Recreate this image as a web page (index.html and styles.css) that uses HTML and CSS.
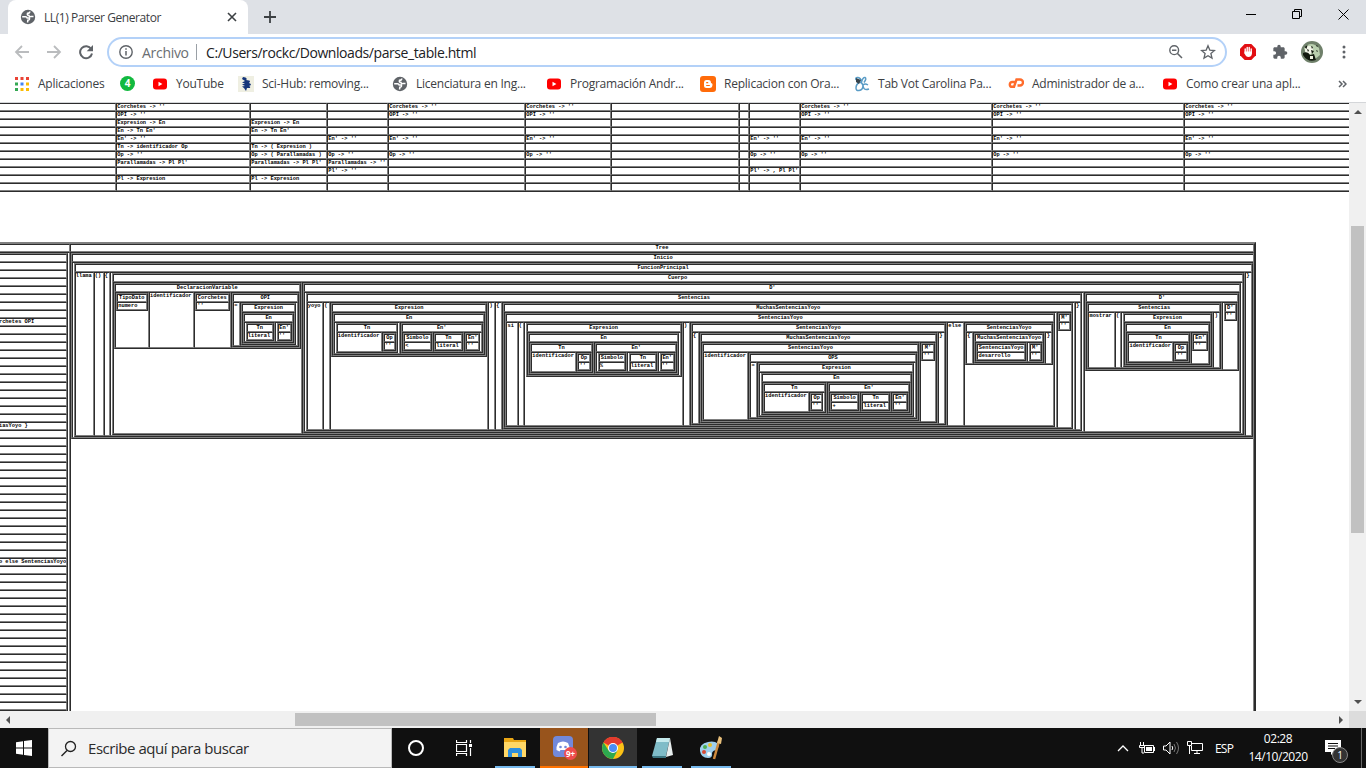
FILE: index.html
```html
<!DOCTYPE html>
<html lang="es">
<head>
<meta charset="utf-8">
<title>LL(1) Parser Generator</title>
<link rel="stylesheet" href="styles.css">
</head>
<body>
<svg width="0" height="0" class="defs">
  <symbol id="globe" viewBox="0 0 16 16"><circle cx="8" cy="8" r="7.2" fill="#5f6368"/><path d="M2.200 7.800h3.300q1.500 0 1.700 1.300h2.300q.3 2-1.700 2.200l-.2 2.200M9.800 2.400q0 1.800-2.300 1.800-.8 2 1.500 2.200 0 1.400 1.800 1.200h2.700" fill="none" stroke="#fff" stroke-width="1.500"/></symbol>
  <symbol id="yt" viewBox="0 0 16 16"><rect x="1" y="2.5" width="14" height="11" rx="3" fill="#f00"/><path d="M6.500 5.800v4.400L10.400 8z" fill="#fff"/></symbol>
</svg>
<header class="tabs">
  <div class="tab">
    <svg class="i16" viewBox="0 0 16 16"><use href="#globe"/></svg>
    <span class="tab-title">LL(1) Parser Generator</span>
    <svg class="close" viewBox="0 0 10 10"><path d="M1 1l8 8M9 1L1 9" stroke="#3c4043" stroke-width="1.6"/></svg>
  </div>
  <svg class="plus" viewBox="0 0 12 12"><path d="M6 0v12M0 6h12" stroke="#3c4043" stroke-width="1.8"/></svg>
  <div class="winctl">
    <svg width="11" height="11"><path d="M0 5.500h10" stroke="#000"/></svg>
    <svg width="11" height="11"><path d="M.5 2.500h7v7h-7zM2.500 2.500v-2h7v7h-2" fill="none" stroke="#000"/></svg>
    <svg width="11" height="11"><path d="M.5.5l10 10M10.500.5l-10 10" stroke="#000"/></svg>
  </div>
</header>
<nav class="toolbar">
  <svg class="nav" viewBox="0 0 16 16"><path d="M15 8H2M8 2L2 8l6 6" stroke="#babcbe" stroke-width="1.8" fill="none"/></svg>
  <svg class="nav" viewBox="0 0 16 16"><path d="M1 8h13M8 2l6 6-6 6" stroke="#babcbe" stroke-width="1.8" fill="none"/></svg>
  <svg class="nav" viewBox="0 0 16 16"><path d="M13.200 5A6 6 0 1 0 14 9.500" stroke="#5f6368" stroke-width="2" fill="none"/><path d="M15 1v6.300H8.700z" fill="#5f6368"/></svg>
  <div class="omnibox">
    <svg class="info" viewBox="0 0 14 14"><circle cx="7" cy="7" r="6.200" fill="none" stroke="#5f6368" stroke-width="1.400"/><path d="M7 6v4.500M7 3.300v1.500" stroke="#5f6368" stroke-width="1.500"/></svg>
    <span class="scheme">Archivo</span><i class="sep"></i><span class="url">C:/Users/rockc/Downloads/parse_table.html</span>
    <svg class="mag" viewBox="0 0 14 14"><circle cx="5.200" cy="5.200" r="4.400" fill="none" stroke="#5f6368" stroke-width="1.400"/><path d="M8.500 8.500L13 13M3 5.200h4.400" stroke="#5f6368" stroke-width="1.500"/></svg>
    <svg class="star" viewBox="0 0 16 16"><path d="M8 1.800l1.800 4.300 4.700.4-3.600 3 1.100 4.600L8 11.700l-4 2.400 1.100-4.600-3.600-3 4.700-.4z" fill="none" stroke="#5f6368" stroke-width="1.300"/></svg>
  </div>
  <svg class="abp" viewBox="0 0 16 16"><path d="M4.700 0h6.600L16 4.700v6.600L11.300 16H4.700L0 11.300V4.700z" fill="#e20e12"/><path d="M5.200 9V5m2 3V3.500M9.200 8V3.500M11.200 9V5" stroke="#fff" stroke-width="1.400" stroke-linecap="round"/><path d="M4.500 7.500h7.400V10q-.5 3-3.500 3Q6 13 4.500 9.500z" fill="#fff"/></svg>
  <svg class="ext" viewBox="0 0 24 24"><path fill="#5f6368" d="M20.500 11H19V7c0-1.100-.9-2-2-2h-4V3.500a2.500 2.500 0 0 0-5 0V5H4c-1.100 0-2 .9-2 2v3.800h1.500a2.700 2.700 0 0 1 0 5.400H2V20c0 1.100.9 2 2 2h3.800v-1.500a2.700 2.700 0 0 1 5.400 0V22H17c1.100 0 2-.9 2-2v-4h1.500a2.500 2.500 0 0 0 0-5z"/></svg>
  <svg class="avatar" viewBox="0 0 22 22"><circle cx="11" cy="11" r="11" fill="#6f806a"/><path d="M3 7q7-8 15 0l1 7-6 5-7-4z" fill="#b9cfae"/><circle cx="8" cy="9" r="4" fill="#f2f5e8"/><path d="M2 12q5-2 7 2l4-1 2 6q-8 3-13-5zM3.500 6l3-2-1 4zM10 5l2 1-1 2zM6 8l2 1-1 2zM10 9l3 1-2 3zM15 4l2 1-1 1zM15 9l2 1-1 1z" fill="#12190f"/><path d="M9 15l3 0v3H9z" fill="#eef2e0"/></svg>
  <svg class="dots" viewBox="0 0 4 16"><circle cx="2" cy="3" r="1.500"/><circle cx="2" cy="8" r="1.500"/><circle cx="2" cy="13" r="1.500"/></svg>
</nav>
<nav class="bookmarks">
  <a class="b1"><svg class="i16" viewBox="0 0 16 16"><path d="M1 1h3v3H1zM6.500 1h3v3h-3zM12 1h3v3h-3z" fill="#ea4335"/><path d="M1 6.500h3v3H1zM1 12h3v3H1z" fill="#34a853"/><path d="M6.500 6.500h3v3h-3z" fill="#4285f4"/><path d="M12 6.500h3v3h-3zM12 12h3v3h-3zM6.500 12h3v3h-3z" fill="#fbbc04"/></svg>Aplicaciones</a>
  <a class="b2"><span class="wa">4</span></a>
  <a class="b3"><svg class="i16" viewBox="0 0 16 16"><use href="#yt"/></svg>YouTube</a>
  <a class="b4"><svg class="i16" viewBox="0 0 16 16"><path d="M0 0h16v16H0z" fill="#efefe2"/><path d="M5 1q3 0 4 2l-1 1q4 0 4 1.500L11 7q2 .5 2 2l-2 1q2 .5 1 2H9l-1 3-2-3-2-1.500 3-.5-3-1.500 3-1L4 6.500 7 5 4 3z" fill="#15357a"/></svg>Sci-Hub: removing...</a>
  <a class="b5"><svg class="i16" viewBox="0 0 16 16"><use href="#globe"/></svg>Licenciatura en Ing...</a>
  <a class="b6"><svg class="i16" viewBox="0 0 16 16"><use href="#yt"/></svg>Programación Andr...</a>
  <a class="b7"><svg class="i16" viewBox="0 0 16 16"><rect width="16" height="16" rx="3" fill="#ff6b0a"/><path d="M6 4h2.500Q11 4 11 7q1.500 0 1.500 1.500Q12.500 12 9.500 12H6.500Q4 12 4 9.500v-3Q4 4 6 4z" fill="#fff"/><path d="M6.200 6.600h2M6.200 9.500h3.600" stroke="#ff6b0a" stroke-width="1.200"/></svg>Replicacion con Ora...</a>
  <a class="b8"><svg class="i16" viewBox="0 0 16 16"><path d="M2 4q-1-3 2-2.500Q7 2 7.500 6 9 1 11 1.500q2 1-1 5M6 6q-4 2-4 6 0 3 3 2.500Q9 14 9 9.500 8.500 7 6 6M9 9q0 6 6 4M14 9q-3-2-5 0" fill="none" stroke="#5a9cc6" stroke-width="1.500"/><path d="M2 2l5 2-2 4-3-2z" fill="#38444c"/></svg>Tab Vot Carolina Pa...</a>
  <a class="b9"><svg class="i16" viewBox="0 0 16 16"><path d="M7 6H4.200a2.300 2.300 0 0 0 0 4.800H6L8.500 3.500H12a3 3 0 0 1 0 6h-2.500" fill="none" stroke="#ff6c2c" stroke-width="2.400"/></svg>Administrador de a...</a>
  <a class="b10"><svg class="i16" viewBox="0 0 16 16"><use href="#yt"/></svg>Como crear una apl...</a>
  <svg class="more" viewBox="0 0 9 8"><path d="M1 1l3 3-3 3M5 1l3 3-3 3" fill="none" stroke="#5f6368" stroke-width="1.500"/></svg>
</nav>
<main class="view">
  <div class="page">
    <table class="parse" id="parse"></table>
    <table class="trace">
      <tr><th class="stack-col"></th><th class="tree-col">Tree</th></tr>
      <tr><td class="tall"><table class="stack" id="stack"></table></td><td id="tree"></td></tr>
    </table>
  </div>
  <div class="vbar"><i class="up"></i><i class="vthumb"></i><i class="down"></i></div>
  <div class="hbar"><i class="left"></i><i class="hthumb"></i><i class="right"></i></div>
  <div class="corner"></div>
</main>
<footer class="taskbar">
  <div class="start"><svg width="16" height="16" viewBox="0 0 16 16"><path d="M0 2.300L7 1.200v6.300H0zM8 1.100L16 0v7.500H8zM0 8.500h7v6.300L0 13.700zM8 8.500h8V16l-8-1.100z" fill="#fff"/></svg></div>
  <div class="search"><svg width="17" height="17" viewBox="0 0 17 17"><circle cx="10.500" cy="6.500" r="5" fill="none" stroke="#222" stroke-width="1.300"/><path d="M7 10.500L1.500 16" stroke="#222" stroke-width="1.400"/></svg><span>Escribe aquí para buscar</span></div>
  <div class="app first"><svg width="18" height="18"><circle cx="9" cy="9" r="7" fill="none" stroke="#fff" stroke-width="2"/></svg></div>
  <div class="app first"><svg width="17" height="16"><path d="M.5 0v2.500h10V0M.5 16v-2.500h10V16M.5 4.500h10v7H.5zM14.500 0v3M14.500 8v8" fill="none" stroke="#fff" stroke-width="1.200"/><path d="M13 4h3v3h-3z" fill="#fff"/></svg></div>
  <div class="app run"><svg width="22" height="20"><path d="M0 0h9l1 2h12v17H0z" fill="#e9a615"/><path d="M0 4h22v15H0z" fill="#ffd766"/><path d="M4 19v-7l2-2h10l2 2v7h-4v-4H8v4z" fill="#2f8fdd"/></svg></div>
  <div class="app discord"><svg width="24" height="26"><rect x="1" y="1" width="20" height="21" rx="4" fill="#7289da"/><path d="M6 8q5-3 10 0 2 4 1.500 7l-3 1.500-1-1.500H8.500l-1 1.500-3-1.500Q4 12 6 8z" fill="#fff"/><circle cx="8.500" cy="12" r="1.300" fill="#7289da"/><circle cx="13.500" cy="12" r="1.300" fill="#7289da"/></svg><b>9+</b></div>
  <div class="app chrome"><svg width="24" height="24" viewBox="-12 -12 24 24"><circle r="11" fill="#fbc116"/><path d="M0 0L-9.500-5.500A11 11 0 0 1 9.500-5.500z" fill="#e33b2e"/><path d="M0 -5h9.800A11 11 0 0 0-9.500-5.500z" fill="#e33b2e"/><path d="M-9.500-5.500A11 11 0 0 0 0 11L4.500 2.500-4.500 2.500z" fill="#2da94f"/><circle r="5" fill="#fff"/><circle r="4" fill="#4a8cf5"/></svg></div>
  <div class="app run note"><svg width="24" height="24"><path d="M7 2h13l-4 18H2z" fill="#7fbcc8"/><path d="M7 2h13l-1 4H6z" fill="#c4e9ec"/><path d="M20 2l3 17-7 2z" fill="#e8eeee"/><path d="M2 20h14l0 2H3z" fill="#3a7480"/></svg></div>
  <div class="app run paint"><svg width="24" height="24"><path d="M9 6Q0 8 1 15t8 7q5 0 4-5 1-3 5-3 4-6-2-8-3-1-7 0z" fill="#9fd0ee"/><circle cx="6" cy="11" r="2" fill="#4caf50"/><circle cx="11" cy="9" r="2" fill="#e8c22d"/><circle cx="5" cy="16" r="2" fill="#d84b35"/><circle cx="10" cy="18" r="2" fill="#fff"/><path d="M20 5l-5 18" stroke="#cf8b3e" stroke-width="2.500"/><path d="M18 7l2-7 3 2-1 6z" fill="#e9c07b"/></svg></div>
  <div class="tray">
    <svg class="chev" width="12" height="8"><path d="M1 7l5-5 5 5" fill="none" stroke="#fff" stroke-width="1.300"/></svg>
    <svg class="bat" width="16" height="12"><path d="M1.500 0v3M4.500 0v3M.5 3.500h5v2h-5zM3 5v6h2" fill="none" stroke="#fff"/><path d="M5.500 3.500h9v7h-9z" fill="none" stroke="#fff"/><path d="M7 5h6v4H7zM15 5h1v4h-1z" fill="#fff"/></svg>
    <svg class="snd" width="16" height="14"><path d="M.5 5h2.500l4-4v12l-4-4H.5z" fill="none" stroke="#fff"/><path d="M9 5q1.500 2 0 4" fill="none" stroke="#fff"/><path d="M11 3q3 4 0 8M13.500 1q4 6 0 12" fill="none" stroke="#777"/></svg>
    <svg class="net" width="16" height="14"><path d="M5 2.500h10.500v7H4.500V5M7 12.500h6M10 10v2.500M.5.500h4v4h-4zM2.500 5v8" fill="none" stroke="#fff"/></svg>
    <span class="lang">ESP</span>
    <span class="clock">02:28<br>14/10/2020</span>
    <span class="notif"><svg width="16" height="16"><path d="M0 0h16v12H9l-3 3v-3H0z" fill="#fff"/><path d="M3 3.500h10M3 6h10M3 8.500h7" stroke="#101010"/></svg><b>1</b></span>
    <i class="peek"></i>
  </div>
</footer>
<script src="tables.js"></script>
</body>
</html>
```
FILE: styles.css
```css
* { box-sizing: border-box; }
html, body { margin: 0; width: 1366px; height: 768px; overflow: hidden; background: #fff; }
body { font-family: "Open Sans", "Noto Sans", sans-serif; font-size: 12px; color: #3c4043; display: flex; flex-direction: column; }
svg { display: block; flex: none; }
.defs { display: none; }
.i16 { width: 16px; height: 16px; }

.tabs { height: 34px; background: #dee1e6; display: flex; align-items: flex-start; padding-left: 8px; }
.tab { width: 240px; height: 34px; background: #fff; border-radius: 8px 8px 0 0; display: flex; align-items: center; padding: 0 11px 0 12px; }
.tab-title { margin-left: 8px; flex: 1; letter-spacing: -0.43px; white-space: nowrap; }
.close { width: 10px; height: 10px; }
.plus { width: 12px; height: 12px; margin: 11px 0 0 16px; }
.winctl { margin: 9px 17px 0 auto; display: flex; gap: 35px; }

.toolbar { height: 35px; display: flex; align-items: center; padding-left: 14px; padding-top: 1px; }
.nav { width: 16px; height: 16px; margin-right: 16px; }
.nav + .omnibox { margin-left: -3px; }
.omnibox { width: 1120px; height: 30px; border: 2px solid #b3d1f8; border-radius: 15px; display: flex; align-items: center; padding: 0 11px 0 10px; font-size: 14px; }
.info { width: 14px; height: 14px; margin-right: 9px; }
.scheme { color: #6a6e72; width: 46px; letter-spacing: -0.3px; white-space: nowrap; }
.sep { width: 1px; height: 16px; background: #9aa0a6; margin: 0 9px 0 8px; }
.url { color: #202124; letter-spacing: -0.42px; flex: 1; white-space: nowrap; }
.mag { width: 14px; height: 14px; margin-right: 17px; }
.star { width: 16px; height: 16px; margin-right: -2px; }
.abp { width: 16px; height: 16px; margin-left: 13px; }
.ext { width: 16px; height: 16px; margin-left: 16px; }
.avatar { width: 22px; height: 22px; margin-left: 13px; }
.dots { width: 4px; height: 16px; margin-left: 19px; fill: #5f6368; }

.bookmarks { height: 34px; display: flex; align-items: center; padding: 0 0 4px 14px; border-bottom: 1px solid #d4d6d9; letter-spacing: -0.23px; }
.bookmarks a { display: flex; align-items: center; gap: 8px; white-space: nowrap; color: #3c4043; }
.b1 { width: 106px; }
.b2 { width: 32px; }
.b3 { width: 86px; }
.b4 { width: 154px; }
.b5 { width: 154px; }
.b6 { width: 154px; }
.b7 { width: 154px; }
.b8 { width: 154px; }
.b9 { width: 154px; }
.b10 { width: 176px; }
.wa { width: 15px; height: 15px; border-radius: 8px; background: #12b93f; color: #fff; font-weight: bold; font-size: 10px; line-height: 15px; text-align: center; }
.more { width: 9px; height: 8px; }

.view { height: 625px; display: grid; grid-template-columns: 1349px 17px; grid-template-rows: 608px 17px; }
.page { overflow: hidden; background: #fff; }
.vbar, .hbar { background: #f0f0f0; }
.vbar { display: flex; flex-direction: column; align-items: center; }
.hbar { display: flex; align-items: center; }
.corner { background: #dcdcdc; }
.vthumb { width: 13px; height: 307px; background: #c1c1c1; margin-top: 112px; }
.hthumb { width: 361px; height: 13px; background: #c1c1c1; margin-left: 285px; }
.up, .down { border: 4px solid transparent; }
.up { border-bottom-color: #505050; border-top: 0; margin-top: 7px; }
.down { border-top-color: #505050; border-bottom: 0; margin: auto 0 7px; }
.left, .right { border: 4px solid transparent; }
.left { border-right-color: #505050; border-left: 0; margin-left: 6px; }
.right { border-left-color: #505050; border-right: 0; margin: 0 6px 0 auto; }

table { border: 1px outset gray; border-spacing: 0; font: bold 5.33px/6px "Liberation Mono", monospace; color: #000; }
th, td { border: 1px inset gray; padding: 0 0.25px; height: 8px; vertical-align: top; white-space: nowrap; text-align: left; overflow: hidden; }
th { text-align: center; }
.parse { table-layout: fixed; width: 1422px; margin: -1px 0 0 -21px; }
.trace { border-width: 2px; table-layout: fixed; width: 1416px; margin: 50px 0 0 -160px; }
.tall { height: 700px; }
.stack-col { width: 228px; }
.tree-col { width: 1184px; }
.stack { table-layout: fixed; width: 225px; }

.taskbar { height: 40px; background: #101010; display: flex; align-items: stretch; }
.start { width: 48px; display: flex; align-items: center; justify-content: center; }
.search { width: 344px; background: #f3f3f3; border: 1px solid #b9b9b9; display: flex; align-items: center; padding-left: 11px; font-size: 15px; color: #2b2b2b; letter-spacing: -0.45px; }
.search span { margin-left: 11px; white-space: nowrap; }
.app { width: 49px; display: flex; align-items: center; justify-content: center; position: relative; }
.first { padding-right: 2px; }
.run::after, .chrome::after, .discord::after { content: ""; position: absolute; bottom: 0; left: 5px; width: 40px; height: 2px; background: #76b9ed; }
.discord { background: #98541c; width: 48px; margin-left: 1px; }
.discord::after { left: 0; width: 48px; background: #ff7200; }
.discord b { position: absolute; left: 24px; top: 19px; width: 13px; height: 13px; border-radius: 7px; background: #ee4c4c; color: #fff; font-size: 8px; line-height: 13px; text-align: center; }
.chrome { background: #333; width: 48px; margin-left: 1px; }
.chrome::after { left: 0; width: 48px; }
.tray { margin-left: auto; display: flex; align-items: center; color: #fff; }
.bat { margin-left: 10px; }
.snd { margin-left: 8px; }
.net { margin-left: 8px; }
.lang { width: 19px; margin-left: 12px; letter-spacing: -0.8px; }
.clock { width: 62px; margin-left: 13px; text-align: center; line-height: 18px; letter-spacing: -0.45px; white-space: nowrap; }
.notif { position: relative; margin-left: 16px; width: 16px; }
.notif b { position: absolute; left: 7px; top: 7px; width: 16px; height: 16px; border-radius: 8px; background: #333; border: 1px solid #888; font-size: 10px; line-height: 14px; text-align: center; font-weight: normal; }
.peek { width: 1px; height: 40px; background: #666; margin: 0 4px 0 20px; }
```
FILE: tables.js
```js
// Column widths of the parse table, then its rows as { column: production }.
const cols = [136, 134, 77, 61, 137, 86, 128, 10, 51, 192, 192, 216];
const every = (cs, text) => Object.fromEntries(cs.map(c => [c, text]));
const rows = [
  every([1, 4, 5, 9, 10, 11], "Corchetes -> ''"),
  every([1, 4, 5, 9, 10, 11], "OPI -> ''"),
  every([1, 2], "Expresion -> En"),
  every([1, 2], "En -> Tn En'"),
  every([1, 3, 4, 5, 8, 9, 10, 11], "En' -> ''"),
  { 1: "Tn -> identificador Op", 2: "Tn -> ( Expresion )" },
  { ...every([1, 3, 4, 5, 8, 9, 10, 11], "Op -> ''"), 2: "Op -> ( Parallamadas )" },
  { 1: "Parallamadas -> Pl Pl'", 2: "Parallamadas -> Pl Pl'", 3: "Parallamadas -> ''" },
  { 3: "Pl' -> ''", 8: "Pl' -> , Pl Pl'" },
  every([1, 2], "Pl -> Expresion"),
  {}
];
const parse = document.getElementById("parse");
parse.innerHTML = "<colgroup>" + cols.map(w => `<col style="width:${w}px">`).join("") + "</colgroup>" +
  rows.map(r => "<tr>" + cols.map((_, i) => `<td>${(r[i] || "").replace(">", "&gt;")}</td>`).join("") + "</tr>").join("");

// Productions applied, one per row.
const applied = {
  8: "DeclaracionVariable -> TipoDato identificador Corchetes OPI",
  21: "Sentencias -> yoyo ( Expresion ) { MuchasSentenciasYoyo }",
  38: "SentenciasYoyo -> si ( Expresion ) SentenciasYoyo else SentenciasYoyo"
};
document.getElementById("stack").innerHTML =
  Array.from({ length: 62 }, (_, i) => `<tr><td>${applied[i] || ""}</td></tr>`).join("");

// Syntax tree: a node is [name, ...children], a leaf is a string.
const empty = name => [name, "''"];
const tnOp = () => ["Tn", "identificador", empty("Op")];
const compare = op => ["Expresion", ["En", tnOp(), ["En'", ["Simbolo", op], ["Tn", "literal"], empty("En'")]]];
const tree = ["Inicio", ["FuncionPrincipal", "llama", "()", "{",
  ["Cuerpo",
    ["DeclaracionVariable", ["TipoDato", "numero"], "identificador", empty("Corchetes"),
      ["OPI", "=", ["Expresion", ["En", ["Tn", "literal"], empty("En'")]]]],
    ["D'",
      ["Sentencias", "yoyo", "(", compare("<"), ")", "{",
        ["MuchasSentenciasYoyo",
          ["SentenciasYoyo", "si", "(", compare("%"), ")",
            ["SentenciasYoyo", "{",
              ["MuchasSentenciasYoyo",
                ["SentenciasYoyo", "identificador", ["OPS", "=", compare("+")]],
                empty("M'")],
              "}"],
            "else",
            ["SentenciasYoyo", "{",
              ["MuchasSentenciasYoyo", ["SentenciasYoyo", "desarrollo"], empty("M'")],
              "}"]],
          empty("M'")],
        "}"],
      ["D'", ["Sentencias", "mostrar", "(",
        ["Expresion", ["En", tnOp(), empty("En'")]], ")"], empty("D'")]]],
  "}"]];
const widths = { 1: 4.75, 2: 9.25, 3: 11.25, 4: 14.6, 7: 24.5, 8: 27.5, 9: 30.5 };
const cellWidth = text => text === "()" ? 10 :
  2 + (widths[text.length] || Math.ceil(text.length * 3.2 + 0.5));
const esc = text => text.replace("<", "&lt;");
function render(node) {
  const [name, ...kids] = node;
  const cells = kids.map(k => Array.isArray(k)
    ? `<td>${render(k)}</td>`
    : `<td style="min-width:${cellWidth(k)}px">${esc(k)}</td>`).join("");
  return `<table><tr><th colspan="${kids.length}" style="min-width:${cellWidth(name)}px">${name}</th></tr><tr>${cells}</tr></table>`;
}
document.getElementById("tree").innerHTML = render(tree);
```
